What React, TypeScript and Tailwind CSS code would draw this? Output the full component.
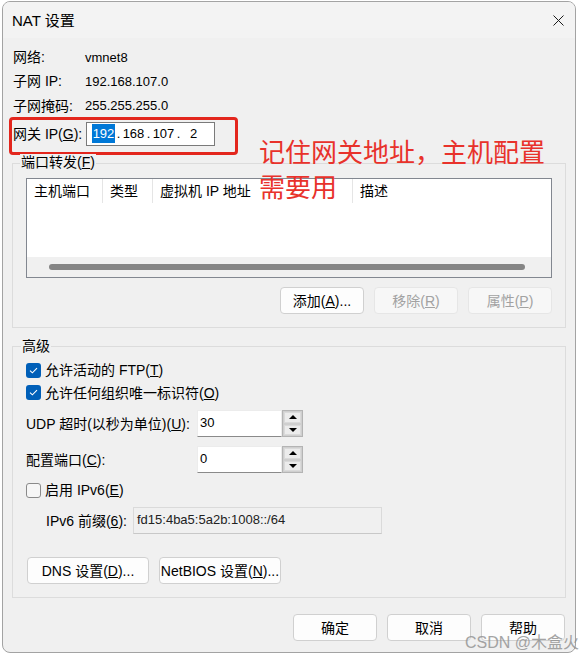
import React from "react"

function Check({ on }: { on?: boolean }) {
    if (on) {
        return (
            <span className="w-[15px] h-[15px] shrink-0 rounded-[3px] bg-[#005fb8] flex items-center justify-center">
                <svg width="9" height="7" viewBox="0 0 9 7">
                    <path d="M1 3.6 L3.4 5.8 L8 1.2" stroke="#fff" strokeWidth="1.1" fill="none" />
                </svg>
            </span>
        )
    }
    return <span className="w-[15px] h-[15px] shrink-0 rounded-[3px] border border-[#8a8a8a] bg-[#f6f6f6]" />
}

function Spin() {
    return (
        <div className="w-[21px] h-[27px] border border-[#b4b4b4] p-[1px] flex flex-col gap-[2px] bg-[#cfcfcf]">
            <div className="flex-1 bg-[#ececec] border border-[#dadada] flex items-center justify-center">
                <svg width="8" height="4" viewBox="0 0 8 4"><path d="M0 4 L4 0 L8 4 Z" fill="#000" /></svg>
            </div>
            <div className="flex-1 bg-[#ececec] border border-[#dadada] flex items-center justify-center">
                <svg width="8" height="4" viewBox="0 0 8 4"><path d="M0 0 L8 0 L4 4 Z" fill="#000" /></svg>
            </div>
        </div>
    )
}

function Field({ value }: { value: string }) {
    return (
        <div className="w-[85px] h-[27px] bg-white border border-[#ececec] border-b-[#8a8a8a] flex items-center pl-[2px] pb-[2px] text-[13px]">
            {value}
        </div>
    )
}

export default function App() {
    const btn = "h-[27px] rounded-[4px] border border-[#d0d0d0] bg-[#fdfdfd] flex items-center justify-center text-[14px]"
    const btnOff = "h-[27px] rounded-[4px] border border-[#e6e6e6] bg-[#f7f7f7] flex items-center justify-center text-[14px] text-[#a2a2a2]"

    return (
        <div className="w-[580px] h-[657px] bg-white relative overflow-hidden text-black text-[14px] leading-none font-[Liberation_Sans,Noto_Sans_CJK_SC,sans-serif]">
            <div className="ml-[2px] mt-[1px] w-[574px] h-[652px] border border-[#a3a3a3] rounded-[8px] bg-[#f0f0f0] overflow-hidden flex flex-col">

                {/* title bar */}
                <div className="h-[36px] bg-[#f3f3f3] flex items-center pl-[9px]">
                    <span className="text-[15px] mt-[1px]">NAT 设置</span>
                    <svg className="ml-auto mr-[11px]" width="11" height="11" viewBox="0 0 11 11">
                        <path d="M0.5 0.5 L10.5 10.5 M10.5 0.5 L0.5 10.5" stroke="#1a1a1a" strokeWidth="1" />
                    </svg>
                </div>

                <div className="flex flex-col pl-[9px]">
                    <div className="pt-[7px] pl-[1px] flex flex-col">
                        <div className="h-[24px] flex items-center">
                            <span className="w-[72px]">网络:</span>
                            <span className="text-[13px]">vmnet8</span>
                        </div>
                        <div className="h-[24px] flex items-center">
                            <span className="w-[72px]">子网 IP:</span>
                            <span className="text-[13px]">192.168.107.0</span>
                        </div>
                        <div className="h-[25px] flex items-center">
                            <span className="w-[72px]">子网掩码:</span>
                            <span className="text-[13px]">255.255.255.0</span>
                        </div>
                        <div className="h-[31px] flex items-center relative">
                            <span className="w-[73px]">网关 IP(<u>G</u>):</span>
                            <div className="w-[129px] h-[24px] bg-white border border-[#7a7a7a] flex items-center pl-[5px] text-[13px]">
                                <span className="w-[23px] h-[19px] bg-[#0078d7] text-white flex items-center justify-center">192</span>
                                <span className="w-[7px] text-center">.</span>
                                <span className="w-[23px] text-center">168</span>
                                <span className="w-[7px] text-center">.</span>
                                <span className="w-[23px] text-center">107</span>
                                <span className="w-[7px] text-center">.</span>
                                <span className="w-[23px] text-center">2</span>
                            </div>
                            <div className="absolute -left-[4px] -top-[1px] w-[229px] h-[38px] border-[3px] border-[#e3261d] rounded-[4px]" />
                            <div className="absolute left-[246px] top-[18px] z-10 text-[26px] leading-[35px] text-[#e8322b] whitespace-nowrap">
                                记住网关地址，主机配置<br />需要用
                            </div>
                        </div>
                    </div>

                    {/* port forwarding */}
                    <div className="relative mt-[14px] w-[554px] h-[165px] border border-[#dcdcdc]">
                        <span className="absolute -top-[10px] left-[7px] px-[1px] bg-[#f0f0f0] leading-[16px]">端口转发(<u>F</u>)</span>
                        <div className="ml-[13px] mt-[14px] w-[526px] h-[100px] border border-[#828790] bg-white flex flex-col">
                            <div className="h-[24px] flex">
                                <div className="w-[76px] border-r border-[#e5e5e5] pl-[7px] flex items-center">主机端口</div>
                                <div className="w-[50px] border-r border-[#e5e5e5] pl-[7px] flex items-center">类型</div>
                                <div className="w-[200px] border-r border-[#e5e5e5] pl-[7px] flex items-center">虚拟机 IP 地址</div>
                                <div className="flex-1 pl-[7px] flex items-center">描述</div>
                            </div>
                            <div className="flex-1" />
                            <div className="h-[20px] bg-[#f0f0f0] pt-[7px]">
                                <div className="ml-[22px] w-[476px] h-[6px] rounded-full bg-[#858585]" />
                            </div>
                        </div>
                        <div className="flex justify-end gap-[10px] mr-[13px] mt-[9px]">
                            <div className={`${btn} w-[84px]`}>添加(<u>A</u>)...</div>
                            <div className={`${btnOff} w-[84px]`}>移除(<u>R</u>)</div>
                            <div className={`${btnOff} w-[84px]`}>属性(<u>P</u>)</div>
                        </div>
                    </div>

                    {/* advanced */}
                    <div className="relative mt-[18px] w-[554px] h-[252px] border border-[#dcdcdc]">
                        <span className="absolute -top-[9px] left-[8px] px-[1px] bg-[#f0f0f0] leading-[16px]">高级</span>
                        <div className="pl-[13px] pt-[12px] flex flex-col">
                            <div className="h-[22px] flex items-center gap-[4px]">
                                <Check on />
                                <span>允许活动的 FTP(<u>T</u>)</span>
                            </div>
                            <div className="h-[23px] flex items-center gap-[4px]">
                                <Check on />
                                <span>允许任何组织唯一标识符(<u>O</u>)</span>
                            </div>
                            <div className="mt-[6px] h-[27px] flex items-center">
                                <span className="w-[171px]">UDP 超时(以秒为单位)(<u>U</u>):</span>
                                <Field value="30" />
                                <Spin />
                            </div>
                            <div className="mt-[9px] h-[27px] flex items-center">
                                <span className="w-[171px]">配置端口(<u>C</u>):</span>
                                <Field value="0" />
                                <Spin />
                            </div>
                            <div className="mt-[9px] h-[16px] flex items-center gap-[4px]">
                                <Check />
                                <span>启用 IPv6(<u>E</u>)</span>
                            </div>
                            <div className="mt-[9px] h-[27px] flex items-center pl-[20px]">
                                <span className="w-[87px]">IPv6 前缀(<u>6</u>):</span>
                                <div className="w-[249px] h-[27px] border border-[#dadada] border-b-[#c8c8c8] bg-[#f0f0f0] flex items-center pl-[3px] pb-[2px] text-[13px] text-[#222]">
                                    fd15:4ba5:5a2b:1008::/64
                                </div>
                            </div>
                            <div className="mt-[23px] h-[25px] flex gap-[10px] pl-[1px]">
                                <div className={`${btn} w-[122px] h-[25px]`}>DNS 设置(<u>D</u>)...</div>
                                <div className={`${btn} w-[122px] h-[25px]`}>NetBIOS 设置(<u>N</u>)...</div>
                            </div>
                        </div>
                    </div>

                    {/* dialog buttons */}
                    <div className="mt-[16px] ml-[281px] flex gap-[10px]">
                        <div className={`${btn} w-[84px] border-[#005fb8]`}>确定</div>
                        <div className={`${btn} w-[84px]`}>取消</div>
                        <div className={`${btn} w-[84px]`}>帮助</div>
                    </div>
                </div>
            </div>

            <div className="absolute left-[465px] top-[635px] text-[16px] leading-[16px] text-[#8f8f8f] opacity-80 whitespace-nowrap">
                CSDN @木盒火
            </div>
        </div>
    )
}
